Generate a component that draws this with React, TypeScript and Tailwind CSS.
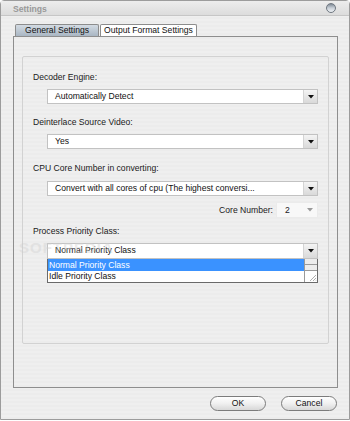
import React from 'react';

const stripes =
  'bg-[repeating-linear-gradient(180deg,#ececec_0px,#ececec_2px,#efefef_2px,#efefef_4px)]';

function Arrow({ dim = false }: { dim?: boolean }) {
  return (
    <svg width="6" height="4" viewBox="0 0 6 4">
      <path d="M0 0H6L3 3.5Z" fill={dim ? '#9a9a9a' : '#111'} />
    </svg>
  );
}

function Combo({ value, className = '' }: { value: string; className?: string }) {
  return (
    <div
      className={`flex h-[15px] border border-[#c2c2c2] bg-white ${className}`}
    >
      <span className="flex-1 truncate pl-[7px] leading-[13px] text-[#111]">{value}</span>
      <div className="flex w-[14px] items-center justify-center border-l border-[#d4d4d4] bg-gradient-to-b from-[#f4f4f4] to-[#d9d9d9]">
        <Arrow />
      </div>
    </div>
  );
}

export default function App() {
  return (
    <div className="w-[350px] h-[421px] overflow-hidden font-['Liberation_Sans',Arial,sans-serif] text-[8.6px] leading-[11px] text-[#1a1a1a]">
      <div className={`relative flex h-[420px] flex-col rounded-t-[4px] border border-[#9c9c9c] ${stripes}`}>
        {/* title bar */}
        <div className="flex h-[15px] items-center justify-between border-b border-[#c6c6c6] bg-gradient-to-b from-[#ededed] to-[#dcdcdc] pl-[12px] pr-[13px]">
          <span className="pt-[2px] font-bold text-[#999999]">Settings</span>
          <div className="h-[10px] w-[10px] rounded-full border border-[#6f7780] bg-gradient-to-b from-[#7f8a96] via-[#c9d0d8] to-[#eef1f4]" />
        </div>

        {/* tabs */}
        <div className="ml-[14px] mt-[8px] flex h-[12px]">
          <div className="flex w-[84px] items-center justify-center rounded-t-[2px] border border-b-0 border-[#8c8c8c] bg-gradient-to-b from-[#d3dbe3] to-[#a9b6c3] text-[#111]">
            General Settings
          </div>
          <div className="ml-[1px] flex w-[97px] items-center justify-center rounded-t-[2px] border border-b-0 border-[#8c8c8c] bg-white text-[#111]">
            Output Format Settings
          </div>
        </div>

        {/* pane */}
        <div className="ml-[12px] flex h-[352px] w-[325px] flex-col border border-[#8e8e8e] pl-[8px] pt-[19px]">
          <div className="relative flex h-[288px] w-[307px] flex-col rounded-[2px] border border-[#d2d2d2] pl-[10px] pr-[10px] pt-[15px]">
            <span>Decoder Engine:</span>
            <Combo value="Automatically Detect" className="ml-[14px] mt-[6px]" />

            <span className="mt-[13px]">Deinterlace Source Video:</span>
            <Combo value="Yes" className="ml-[14px] mt-[6px]" />

            <span className="mt-[14px]">CPU Core Number in converting:</span>
            <Combo
              value="Convert with all cores of cpu (The highest conversi..."
              className="ml-[14px] mt-[7px]"
            />

            <div className="mt-[6px] flex items-center justify-end">
              <span className="mr-[3px]">Core Number:</span>
              <div className="flex h-[16px] w-[42px] border border-[#ebebeb] bg-[#f8f8f8]">
                <span className="flex-1 pl-[8px] leading-[14px]">2</span>
                <div className="flex w-[14px] items-center justify-center">
                  <Arrow dim />
                </div>
              </div>
            </div>

            <span className="mt-[8px]">Process Priority Class:</span>
            <div className="relative ml-[14px] mt-[6px]">
              <Combo value="Normal Priority Class" className="relative h-[16px]" />
              <span className="pointer-events-none absolute -left-[28px] -top-[1px] text-[15px] font-bold tracking-[1px] text-[#cfcfcf] opacity-40">
                SOFTPEDIA
              </span>
              {/* open list */}
              <div className="absolute left-0 right-0 top-[16px] flex h-[24px] border border-t-0 border-[#6a6a6a] bg-white">
                <div className="flex flex-1 flex-col">
                  <span className="h-[12px] bg-[#3a92ff] pl-[1px] leading-[12px] text-white">
                    Normal Priority Class
                  </span>
                  <span className="h-[11px] pl-[1px] leading-[11px] text-[#111]">
                    Idle Priority Class
                  </span>
                </div>
                <div className="flex w-[13px] flex-col border-l border-[#9a9a9a]">
                  <div className="h-[6px] border-b border-[#9a9a9a] bg-[#ececec]" />
                  <div className="h-[6px] border-b border-[#9a9a9a] bg-[#ececec]" />
                  <div className="flex flex-1 items-end justify-end bg-white">
                    <svg width="8" height="8" viewBox="0 0 8 8">
                      <path d="M7 1L1 7M7 4L4 7M7 6.5L6.5 7" stroke="#9a9a9a" strokeWidth="0.8" />
                    </svg>
                  </div>
                </div>
              </div>
            </div>
          </div>
        </div>

        {/* buttons */}
        <div className="mr-[12px] mt-[8px] flex justify-end gap-[15px]">
          <button className="flex h-[15px] w-[56px] items-center justify-center rounded-full border border-[#7c7c7c] bg-gradient-to-b from-[#ffffff] via-[#f0f0f0] to-[#d8d8d8] text-[#111]">
            OK
          </button>
          <button className="flex h-[15px] w-[56px] items-center justify-center rounded-full border border-[#7c7c7c] bg-gradient-to-b from-[#ffffff] via-[#f0f0f0] to-[#d8d8d8] text-[#111]">
            Cancel
          </button>
        </div>
      </div>
    </div>
  );
}
